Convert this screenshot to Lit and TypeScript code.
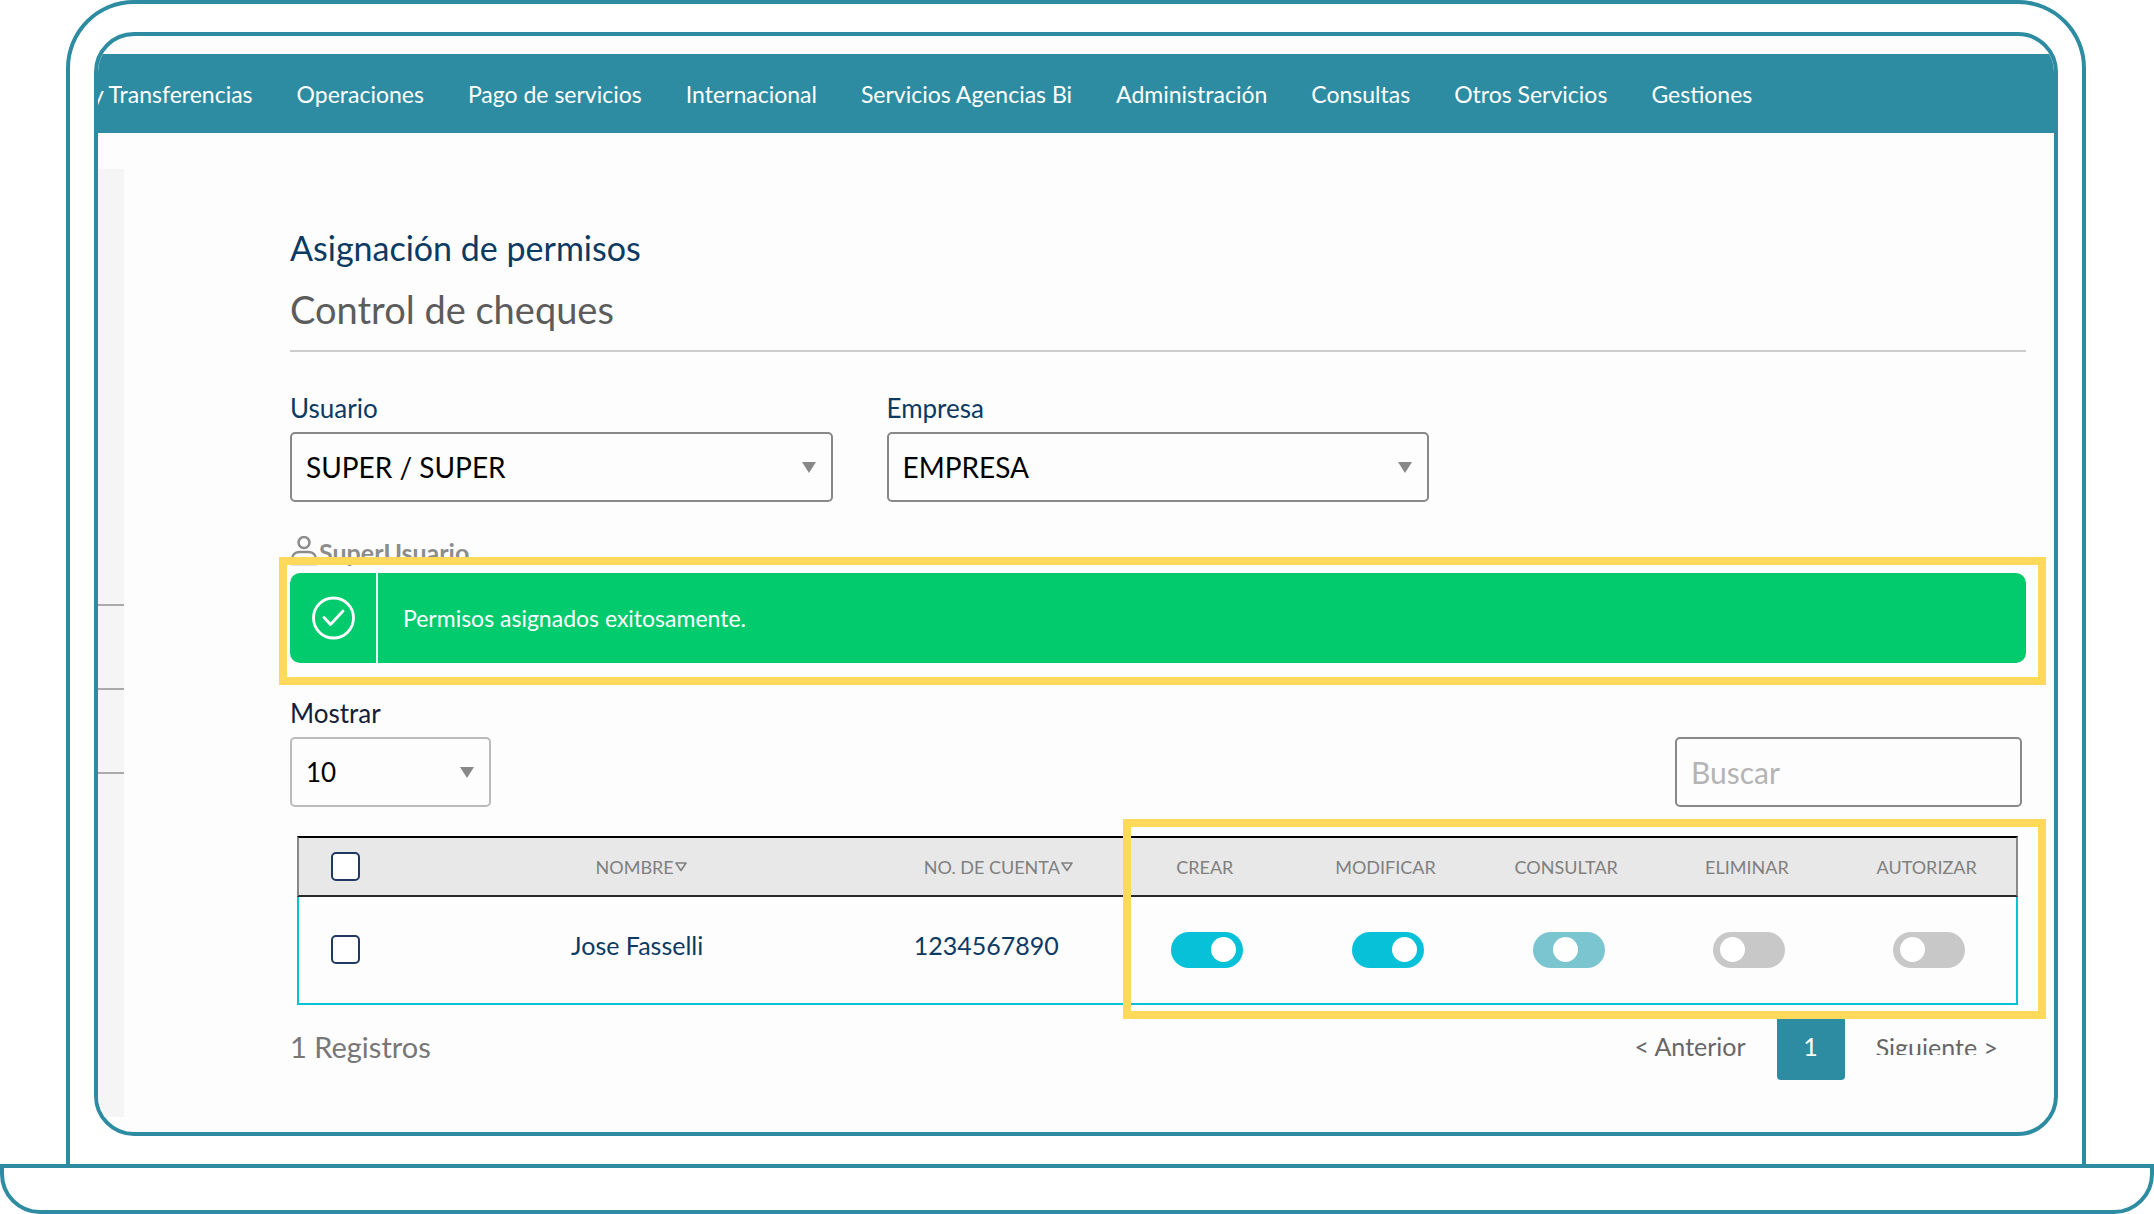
import { LitElement, html, css, svg } from "lit";
import { customElement, state } from "lit/decorators.js";

type Level = "on" | "partial" | "off";

const MENU = [
  "y Transferencias",
  "Operaciones",
  "Pago de servicios",
  "Internacional",
  "Servicios Agencias Bi",
  "Administración",
  "Consultas",
  "Otros Servicios",
  "Gestiones",
];

const PERMISSIONS = ["CREAR", "MODIFICAR", "CONSULTAR", "ELIMINAR", "AUTORIZAR"];

const sortIcon = html`<svg class="sort-icon" viewBox="0 0 12 10" aria-hidden="true">
  ${svg`<path d="M1 1h10L6 8.5z" fill="none" stroke="currentColor" stroke-width="1.6" stroke-linejoin="round"/>`}
</svg>`;

const caret = html`<svg class="caret" viewBox="0 0 14 11" aria-hidden="true">
  ${svg`<path d="M0 0h14L7 11z" fill="#888"/>`}
</svg>`;

@customElement("app-root")
export class AppRoot extends LitElement {
  @state() private rows: { name: string; account: string; levels: Level[] }[] = [
    { name: "Jose Fasselli", account: "1234567890", levels: ["on", "on", "partial", "off", "off"] },
  ];

  static styles = css`
    :host {
      display: flex;
      flex-direction: column;
      min-height: 100vh;
      background: #fff;
      font-family: Lato, "Open Sans", sans-serif;
      color: #0b3a63;
      --teal: #2d8ca1;
      --cyan: #06c1d8;
      --mark: #ffd95a;
    }
    *, *::before, *::after { box-sizing: border-box; }
    button, input, select { font: inherit; color: inherit; margin: 0; }

    .lid {
      flex: 1;
      display: flex;
      margin: 0 68px 0 66px;
      padding: 28px 24px;
      border: 4px solid var(--teal);
      border-bottom: 0;
      border-radius: 68px 68px 0 0;
    }
    .screen {
      flex: 1;
      min-width: 0;
      display: flex;
      flex-direction: column;
      padding-top: 18px;
      border: 4px solid var(--teal);
      border-radius: 40px;
      background: #fdfdfd;
      overflow: hidden;
    }
    .base {
      height: 50px;
      border: 4px solid var(--teal);
      border-radius: 0 0 40px 40px;
    }

    .menu {
      display: flex;
      align-items: center;
      gap: 44px;
      height: 79px;
      background: var(--teal);
      overflow: hidden;
    }
    .menu a {
      color: #fff;
      font-size: 23px;
      line-height: 28px;
      white-space: nowrap;
      text-decoration: none;
    }
    .menu a:first-child { margin-left: -6px; }

    .body { flex: 1; display: flex; }
    .rail {
      width: 26px;
      margin: 36px 0 15px;
      padding-top: 435px;
      background: #f5f5f5;
    }
    .rail-line { height: 2px; margin-bottom: 82px; background: #aaa; }

    .content { flex: 1; min-width: 0; padding: 95px 28px 0 166px; }
    h1, h2 { margin: 0; }
    h1 { font-size: 34px; line-height: 40px; font-weight: 400; }
    h2 {
      margin-top: 19px;
      padding-bottom: 19px;
      border-bottom: 2px solid #ccc;
      font-size: 38px;
      line-height: 44px;
      font-weight: 400;
      color: #5c5c5c;
    }

    .filters { display: grid; grid-template-columns: 31.25% 31.25%; column-gap: 54px; margin-top: 40px; }
    .field { display: flex; flex-direction: column; gap: 8px; }
    .field label { font-size: 26px; line-height: 32px; }
    .label-dark { color: #14203a; }
    .pick { display: grid; align-items: center; }
    .pick select, .pick .caret { grid-area: 1 / 1; }
    .pick select {
      appearance: none;
      width: 100%;
      height: 70px;
      padding: 0 40px 0 14px;
      border: 2px solid #888;
      border-radius: 5px;
      background: #fdfdfd;
      color: #000;
      font-size: 28px;
    }
    .caret {
      justify-self: end;
      width: 14px;
      height: 11px;
      margin-right: 17px;
      pointer-events: none;
    }

    .role {
      display: flex;
      align-items: center;
      gap: 1px;
      margin-top: 34px;
      color: #8c8c8c;
      font-size: 25px;
      font-weight: 700;
      line-height: 32px;
    }
    .role svg { width: 28px; height: 32px; }

    .notice {
      position: relative;
      display: flex;
      align-items: stretch;
      height: 90px;
      margin-top: 5px;
      border-radius: 10px;
      background: #02cb6d;
      color: #fff;
      font-size: 23px;
    }
    .notice-icon {
      display: flex;
      align-items: center;
      justify-content: center;
      width: 88px;
      border-right: 2px solid #e6fff2;
    }
    .notice-icon svg { width: 44px; height: 44px; }
    .notice p { align-self: center; margin: 0 0 0 25px; line-height: 28px; }
    .notice::after {
      content: "";
      position: absolute;
      inset: -16px -20px -22px -11px;
      border: 8px solid var(--mark);
    }

    .tools {
      display: flex;
      justify-content: space-between;
      align-items: flex-end;
      margin-top: 34px;
      padding-right: 4px;
    }
    .page-size { width: 201px; }
    .page-size select { border-color: #bbb; font-size: 26px; }
    .search {
      width: 347px;
      height: 70px;
      padding: 0 14px;
      border: 2px solid #888;
      border-radius: 5px;
      background: #fdfdfd;
      color: #333;
      font-size: 30px;
    }
    .search::placeholder { color: #b4b4b4; opacity: 1; }

    .grid { position: relative; margin: 29px 8px 0 7px; }
    .grid::after {
      content: "";
      position: absolute;
      inset: -17px -28px -14px calc(47.5% + 9px);
      border: 8px solid var(--mark);
      pointer-events: none;
    }
    table { width: 100%; border-collapse: separate; border-spacing: 0; table-layout: fixed; }
    .col-check { width: 6%; }
    .col-name { width: 28%; }
    .col-account { width: 13.5%; }
    th, td { padding: 0; text-align: center; }
    th {
      height: 61px;
      border-top: 2px solid #000;
      border-bottom: 2px solid #2a2a2e;
      background: #e8e8e8;
      color: #808080;
      font-size: 18px;
      font-weight: 400;
    }
    th:first-child { border-left: 2px solid #888; }
    th:last-child { border-right: 2px solid #888; }
    td { height: 108px; padding-bottom: 1px; border-bottom: 2px solid var(--cyan); font-size: 25px; }
    td:first-child { border-left: 2px solid var(--cyan); }
    td:last-child { border-right: 2px solid var(--cyan); }
    td.text { padding: 0 8px 10px 0; }
    td.account { padding-right: 24px; }
    td.toggle-cell { padding-left: 5px; }
    .sort { padding: 0; border: 0; background: none; white-space: nowrap; }
    .sort-icon { width: 12px; height: 10px; margin-left: 1px; vertical-align: 2px; }
    .check {
      display: block;
      appearance: none;
      width: 29px;
      height: 29px;
      margin-left: 32px;
      border: 2px solid #1f3864;
      border-radius: 5px;
      background: #fff;
    }
    .switch {
      appearance: none;
      display: inline-flex;
      align-items: center;
      vertical-align: middle;
      width: 72px;
      height: 36px;
      padding: 0 7px;
      border-radius: 18px;
      background: #c8c8c8;
    }
    .switch::before {
      content: "";
      width: 25px;
      height: 25px;
      border-radius: 50%;
      background: #fff;
    }
    .switch.on { background: var(--cyan); justify-content: flex-end; }
    .switch.partial { background: #7ac5cf; padding-left: 20px; }

    .summary {
      display: flex;
      justify-content: space-between;
      margin-top: 5px;
      padding-right: 28px;
      color: #666;
      font-size: 25px;
      line-height: 68px;
    }
    .total { margin: 3px 0 0; font-size: 29px; color: #777; }
    .pager { display: flex; align-items: center; gap: 31px; }
    .pager button { padding: 0; border: 0; background: none; line-height: 68px; }
    .pager .current {
      width: 68px;
      border-radius: 4px;
      background: var(--teal);
      color: #fff;
    }
    .pager .next { height: 18px; line-height: 20px; overflow: hidden; }
  `;

  private select(id: string, label: string, value: string, extra = "") {
    return html`<div class="field ${extra}">
      <label for=${id} class=${extra ? "label-dark" : ""}>${label}</label>
      <div class="pick">
        <select id=${id}><option>${value}</option></select>
        ${caret}
      </div>
    </div>`;
  }

  render() {
    return html`
      <div class="lid">
        <div class="screen">
          <nav class="menu">${MENU.map((m) => html`<a href="#">${m}</a>`)}</nav>
          <div class="body">
            <aside class="rail">
              <div class="rail-line"></div>
              <div class="rail-line"></div>
              <div class="rail-line"></div>
            </aside>
            <main class="content">
              <h1>Asignación de permisos</h1>
              <h2>Control de cheques</h2>
              <div class="filters">
                ${this.select("user", "Usuario", "SUPER / SUPER")}
                ${this.select("company", "Empresa", "EMPRESA")}
              </div>
              <div class="role">
                <svg viewBox="0 0 28 32" fill="none" stroke="#8c8c8c" stroke-width="2.5" aria-hidden="true">
                  <circle cx="14" cy="6.5" r="5.5" />
                  <path d="M2 28v-4c0-5 3-8 7-8h10c4 0 7 3 7 8v4z" />
                </svg>
                <span>SuperUsuario</span>
              </div>
              <div class="notice" role="status">
                <div class="notice-icon">
                  <svg viewBox="0 0 44 44" fill="none" stroke="#fff" stroke-width="2.8" aria-hidden="true">
                    <circle cx="22.5" cy="22" r="20" />
                    <path d="M13 21.5l6.5 7L32 15" stroke-linecap="round" stroke-linejoin="round" />
                  </svg>
                </div>
                <p>Permisos asignados exitosamente.</p>
              </div>
              <div class="tools">
                ${this.select("size", "Mostrar", "10", "page-size")}
                <input class="search" type="search" placeholder="Buscar" aria-label="Buscar" />
              </div>
              <div class="grid">
                <table>
                  <colgroup>
                    <col class="col-check" /><col class="col-name" /><col class="col-account" />
                    ${PERMISSIONS.map(() => html`<col />`)}
                  </colgroup>
                  <thead>
                    <tr>
                      <th><input class="check" type="checkbox" aria-label="Todos" /></th>
                      <th><button class="sort">NOMBRE${sortIcon}</button></th>
                      <th><button class="sort">NO. DE CUENTA${sortIcon}</button></th>
                      ${PERMISSIONS.map((p) => html`<th>${p}</th>`)}
                    </tr>
                  </thead>
                  <tbody>
                    ${this.rows.map(
                      (r) => html`<tr>
                        <td><input class="check" type="checkbox" aria-label=${r.name} /></td>
                        <td class="text">${r.name}</td>
                        <td class="text account">${r.account}</td>
                        ${r.levels.map(
                          (l, i) => html`<td class="toggle-cell">
                            <input class="switch ${l}" type="checkbox" role="switch"
                              aria-label=${PERMISSIONS[i]} .checked=${l !== "off"} />
                          </td>`
                        )}
                      </tr>`
                    )}
                  </tbody>
                </table>
              </div>
              <div class="summary">
                <p class="total">1 Registros</p>
                <div class="pager">
                  <button>&lt; Anterior</button>
                  <button class="current">1</button>
                  <button class="next">Siguiente &gt;</button>
                </div>
              </div>
            </main>
          </div>
        </div>
      </div>
      <div class="base"></div>
    `;
  }
}
